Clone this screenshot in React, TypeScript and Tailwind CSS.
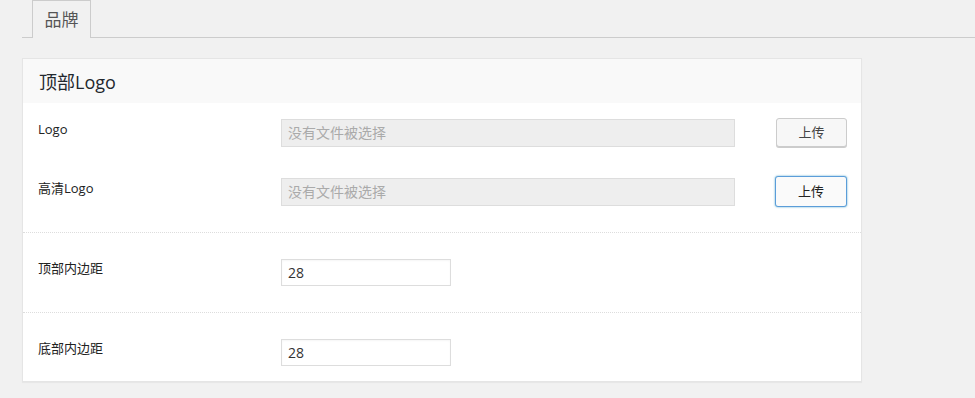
const font = "font-['Open_Sans','Noto_Sans_CJK_SC',sans-serif]";

type FileRowProps = {
  label: string;
  focused?: boolean;
};

const FileRow = ({ label, focused }: FileRowProps) => {
  return (
    <div className="flex items-start">
      <div className="w-[243px] pt-[2px] text-[13px] leading-[16px] text-[#222]">{label}</div>
      <div className="w-[454px] h-[28px] border border-[#ddd] bg-[#eee] px-[6px] text-[14px] leading-[26px] text-[#aaa]">
        没有文件被选择
      </div>
      {focused ? (
        <button className="ml-[40px] -mt-[2px] w-[72px] h-[31px] rounded-[3px] border border-[#5b9dd9] bg-[#fafafa] text-[13px] text-[#222] shadow-[0_0_2px_rgba(30,140,190,0.8)]">
          上传
        </button>
      ) : (
        <button className="ml-[41px] -mt-[1px] w-[71px] h-[29px] rounded-[3px] border border-[#ccc] bg-[#f7f7f7] text-[13px] text-[#444] shadow-[0_1px_0_#ccc]">
          上传
        </button>
      )}
    </div>
  );
};

type NumberRowProps = {
  label: string;
  value: string;
};

const NumberRow = ({ label, value }: NumberRowProps) => {
  return (
    <div className="flex items-start">
      <div className="w-[243px] pt-[1px] text-[13px] leading-[16px] text-[#222]">{label}</div>
      <div className="w-[170px] h-[27px] border border-[#ddd] bg-white px-[6px] text-[14px] leading-[25px] text-[#333] shadow-[inset_0_1px_2px_rgba(0,0,0,0.04)]">
        {value}
      </div>
    </div>
  );
};

export default function App() {
  return (
    <div className={`${font} min-h-[398px] bg-[#f1f1f1]`}>
      <div className="ml-[22px] flex border-b border-[#ccc] h-[38px]">
        <div className="ml-[10px] w-[59px] h-[38px] border border-b-0 border-[#ccc] bg-[#f1f1f1] text-center text-[17px] leading-[38px] text-[#555]">
          品牌
        </div>
      </div>

      <div className="ml-[22px] mt-[20px] w-[840px] border border-[#e5e5e5] bg-white shadow-[0_1px_1px_rgba(0,0,0,0.04)]">
        <div className="h-[44px] bg-[#f9f9f9] pl-[16px] text-[18px] leading-[46px] text-[#23282d]">
          顶部Logo
        </div>

        <div className="pl-[15px] pt-[16px] pb-[25px] border-b border-dotted border-[#ddd]">
          <FileRow label="Logo" />
          <div className="h-[31px]" />
          <FileRow label="高清Logo" focused />
        </div>

        <div className="pl-[15px] pt-[26px] pb-[26px] border-b border-dotted border-[#ddd]">
          <NumberRow label="顶部内边距" value="28" />
        </div>

        <div className="pl-[15px] pt-[26px] pb-[15px]">
          <NumberRow label="底部内边距" value="28" />
        </div>
      </div>
    </div>
  );
}
